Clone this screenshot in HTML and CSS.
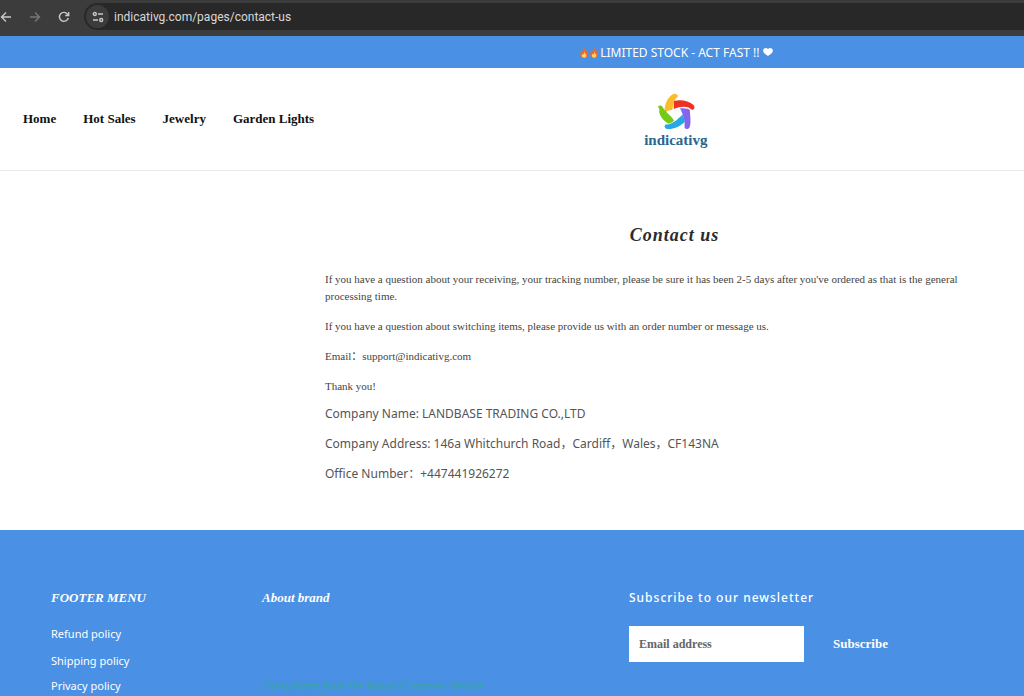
FILE: index.html
```
<!DOCTYPE html>
<html lang="en">
<head>
<meta charset="utf-8">
<title>Contact us – indicativg</title>
<link rel="stylesheet" href="styles.css">
</head>
<body>
<div class="browser-bar">
  <button class="tool" aria-label="Back"><svg width="12" height="12" viewBox="0 0 12 12"><path d="M11 6H1.500M6 1.500 1.500 6 6 10.500"/></svg></button>
  <button class="tool tool-off" aria-label="Forward"><svg width="12" height="12" viewBox="0 0 12 12"><path d="M1 6h9.500M6 1.500 10.500 6 6 10.500"/></svg></button>
  <button class="tool" aria-label="Reload"><svg width="12" height="12" viewBox="0 0 12 12"><path d="M10.300 7A4.500 4.500 0 1 1 9.500 3.100L10.600 4.300M10.700 1v3.500H7.200"/></svg></button>
  <div class="address">
    <button class="site-info" aria-label="Site information"><svg width="12" height="12" viewBox="0 0 12 12"><circle cx="2.800" cy="3" r="1.500"/><path d="M6 3h5M1 9h5"/><circle cx="9.200" cy="9" r="1.500"/></svg></button>
    <input class="url" type="text" aria-label="Address" value="indicativg.com/pages/contact-us">
  </div>
</div>

<div class="announcement">
  <svg class="flame" viewBox="0 0 10 12"><path fill="#f4672b" d="M4.200 0C5.200 2 8.300 3.500 9 6.500c.8 3.300-1 5.500-4 5.500S.400 10 .900 7.200C1.200 5.500 2.300 4.800 2.400 3.400c.8.500 1.100 1 1.200 1.700C4.800 3.800 4.900 2 4.200 0z"/><path fill="#ffd45a" d="M5.300 5C5.500 7 7.700 7.700 7.600 9.500 7.500 11 6.200 11.700 5 11.700S2.500 10.800 2.600 9.300c.1-1 .7-1.300.9-2 .5.300.7.600.8 1 .8-.8 1.100-1.900 1-3.300z"/></svg>
  <svg class="flame" viewBox="0 0 10 12"><path fill="#f4672b" d="M4.200 0C5.200 2 8.300 3.500 9 6.500c.8 3.300-1 5.500-4 5.500S.400 10 .900 7.200C1.200 5.500 2.300 4.800 2.400 3.400c.8.500 1.100 1 1.200 1.700C4.800 3.800 4.900 2 4.200 0z"/><path fill="#ffd45a" d="M5.300 5C5.500 7 7.700 7.700 7.600 9.500 7.500 11 6.200 11.700 5 11.700S2.500 10.800 2.600 9.300c.1-1 .7-1.300.9-2 .5.300.7.600.8 1 .8-.8 1.100-1.900 1-3.300z"/></svg>
  <span>LIMITED STOCK - ACT FAST !!</span>
  <svg class="heart" viewBox="0 0 11 9"><path fill="#fff" d="M5.500 9C3.500 7.600 0 5.700 0 2.900 0 .2 3.800-1 5.500 1.400 7.200-1 11 .2 11 2.900 11 5.700 7.500 7.600 5.500 9z"/></svg>
</div>

<header class="header">
  <nav class="nav">
    <a href="#">Home</a><a href="#">Hot Sales</a><a href="#">Jewelry</a><a href="#">Garden Lights</a>
  </nav>
  <a class="logo" href="#">
    <svg class="logo-mark" viewBox="0 0 38 38">
      <path fill="#fdbb2c" d="M7.500 20.500C7 13 10 4.500 15.500 1.500 18-.2 21 1 20.800 3.500L18.800 5.500C16.500 8 16.300 13 15.300 17 12 17 9.500 18 7.500 20.500z"/>
      <path fill="#ee3023" d="M17 8C23 6 32 7.500 36.500 12 38.500 14.500 37 17.500 34.500 16.500L31.500 14.500C27 13 22 14 16.800 16C16.800 13 17 10 17 8z"/>
      <path fill="#8465ef" d="M23 15.300C27 15.500 30 15.300 32.800 16.700 33 22 34.500 30 32.500 34.500 30.500 37 27.500 36 27.500 34 28 29 26.500 22 23 15.300z"/>
      <path fill="#25a8e5" d="M25.500 21.500C27 24 28 27 27.200 29.500 23 33.500 16 36.500 10.500 36 7.500 36 7 33 8.500 31.500L11 31.500C17 30 21 26 25.500 21.500z"/>
      <path fill="#76c919" d="M1 13.500C3 11.500 5.500 13 6.500 15.500 9 19.500 14 22.500 17 27.500 16.500 29 13 30.500 11 30.500 5 27 1 20 2.500 16.500z"/>
    </svg>
    <span>indicativg</span>
  </a>
</header>

<main class="main">
  <h1>Contact us</h1>
  <div class="copy">
    <p>If you have a question about your receiving, your tracking number, please be sure it has been 2-5 days after you've ordered as that is the general processing time.</p>
    <p>If you have a question about switching items, please provide us with an order number or message us.</p>
    <p>Email：support@indicativg.com</p>
    <p>Thank you!</p>
  </div>
  <div class="company">
    <p>Company Name: LANDBASE TRADING CO.,LTD</p>
    <p>Company Address: 146a Whitchurch Road，Cardiff，Wales，CF143NA</p>
    <p>Office Number：+447441926272</p>
  </div>
</main>

<footer class="footer">
  <section>
    <h2>FOOTER MENU</h2>
    <ul class="links">
      <li><a href="#">Refund policy</a></li>
      <li><a href="#">Shipping policy</a></li>
      <li><a href="#">Privacy policy</a></li>
    </ul>
  </section>
  <section class="brand">
    <h2>About brand</h2>
    <p>Consultants from the Brand Customer Service</p>
  </section>
  <section>
    <h2 class="newsletter-title">Subscribe to our newsletter</h2>
    <form class="newsletter">
      <input type="email" aria-label="Email address" placeholder="Email address">
      <button type="button">Subscribe</button>
    </form>
  </section>
</footer>
</body>
</html>
```
FILE: styles.css
```
* { box-sizing: border-box; }
body {
  margin: 0;
  min-height: 100vh;
  display: flex;
  flex-direction: column;
  background: #fff;
  color: #444;
  font-family: "Liberation Serif", "Noto Sans CJK SC", serif;
}
h1, h2, p, ul { margin: 0; padding: 0; }
a { color: inherit; text-decoration: none; }
button, input { border: 0; font: inherit; color: inherit; }
svg { display: block; flex: none; }

.browser-bar {
  display: flex;
  align-items: center;
  padding: 3px 0 6px;
  background: #3c3c3c;
  color: #c7c7c7;
}
.tool, .site-info {
  display: grid;
  place-items: center;
  padding: 0;
  background: none;
}
.tool { width: 12px; margin-right: 17px; }
.tool svg, .site-info svg { fill: none; stroke: currentColor; stroke-width: 1.400; }
.tool-off { color: #777; }
.address {
  flex: 1;
  height: 27px;
  display: flex;
  align-items: center;
  gap: 5px;
  padding-left: 2px;
  margin-left: -3px;
  border-radius: 14px 0 0 14px;
  background: #282828;
}
.site-info { width: 23px; height: 23px; border-radius: 50%; background: #3c3c3c; }
.url {
  flex: 1;
  padding: 0;
  background: none;
  color: #d8d8d8;
  font: 12px Roboto, sans-serif;
}

.announcement {
  height: 32px;
  display: flex;
  align-items: center;
  justify-content: center;
  padding-left: 32%;
  background: #4a90e4;
  color: #fff;
  font: 12px "Noto Sans", sans-serif;
}
.flame { width: 10px; height: 11px; }
.flame + span { margin-left: 1px; }
.heart { width: 10px; height: 8px; margin-left: 3px; }

.header {
  display: grid;
  grid-template-columns: 32% 1fr;
  align-items: center;
  height: 103px;
  border-bottom: 1px solid #e8e8e8;
}
.nav {
  display: flex;
  gap: 27px;
  padding-left: 23px;
  white-space: nowrap;
  color: #111;
  font-size: 13px;
  font-weight: 700;
}
.logo {
  justify-self: center;
  display: flex;
  flex-direction: column;
  align-items: center;
  gap: 1px;
  padding-top: 4px;
  color: #28668f;
  font-size: 15px;
  line-height: 17px;
  font-weight: 700;
}
.logo-mark { width: 38px; height: 38px; }

.main {
  padding: 52px 0 35px 325px;
}
.main h1 {
  margin-bottom: 24px;
  color: #2b2b2b;
  font-size: 18px;
  line-height: 24px;
  font-style: italic;
  letter-spacing: 1px;
  text-align: center;
}
.copy { padding-right: 24px; font-size: 11px; line-height: 17px; }
.copy p { margin-bottom: 13px; }
.copy p:last-child { margin-bottom: 10px; }
.company {
  color: #555;
  font: 12px/17px "Noto Sans", "Noto Sans CJK SC", sans-serif;
}
.company p { margin-bottom: 13px; }

.footer {
  flex: 1;
  display: grid;
  grid-template-columns: 211px 367px 1fr;
  padding: 58px 51px 0;
  background: #4a90e4;
  color: #fff;
}
.footer h2 {
  font-size: 13px;
  line-height: 20px;
  font-style: italic;
}
.links {
  padding-top: 12px;
  list-style: none;
  font: 11px/27px "Noto Sans", sans-serif;
}
.links li:last-child { line-height: 24px; }
.brand p {
  padding-top: 70px;
  color: #35a99d;
  font: italic 11px/16px "Noto Sans", sans-serif;
}
.footer .newsletter-title {
  font: 500 12px/20px "Noto Sans", sans-serif;
  letter-spacing: 1px;
}
.newsletter { display: flex; margin-top: 18px; }
.newsletter input {
  width: 175px;
  height: 36px;
  padding: 0 10px;
  border-radius: 0;
  background: #fff;
  font-size: 12px;
}
.newsletter input::placeholder { color: #666; font-weight: 700; opacity: 1; }
.newsletter button {
  margin-left: 29px;
  padding: 0;
  background: none;
  font-size: 13px;
  font-weight: 700;
}
```
